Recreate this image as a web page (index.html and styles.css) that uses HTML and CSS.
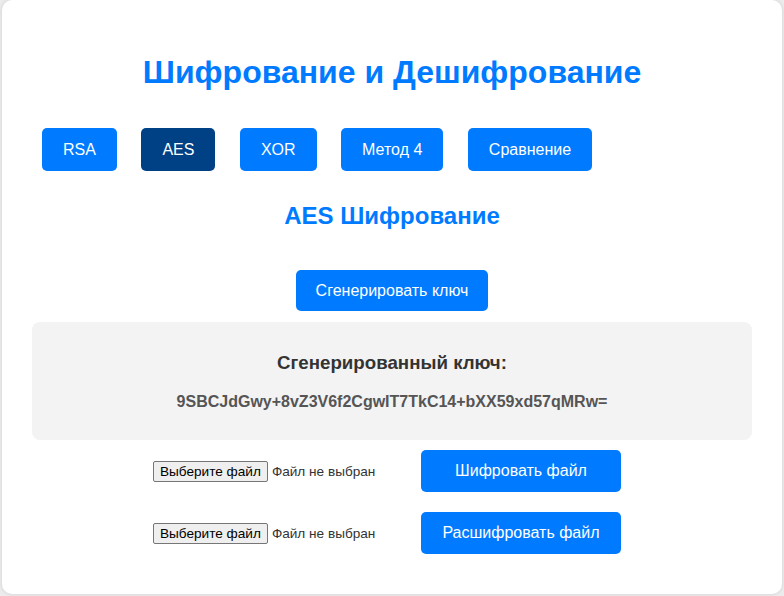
FILE: index.html
```html
<!DOCTYPE html>
<html lang="ru">
<head>
<meta charset="utf-8">
<title>Шифрование и Дешифрование</title>
<link rel="stylesheet" href="styles.css">
</head>
<body>
<div class="card">
  <h1 class="title">Шифрование и Дешифрование</h1>
  <nav class="tabs">
    <button class="btn tab">RSA</button>
    <button class="btn tab active">AES</button>
    <button class="btn tab">XOR</button>
    <button class="btn tab">Метод 4</button>
    <button class="btn tab">Сравнение</button>
  </nav>
  <section class="panel">
    <h2 class="panel-title">AES Шифрование</h2>
    <div class="gen-row">
      <button class="btn">Сгенерировать ключ</button>
    </div>
    <div class="key-box">
      <h3 class="key-title">Сгенерированный ключ:</h3>
      <p class="key-value">9SBCJdGwy+8vZ3V6f2CgwIT7TkC14+bXX59xd57qMRw=</p>
    </div>
    <div class="file-row">
      <label class="picker">
        <input type="file" class="hidden-input">
        <span class="picker-btn">Выберите файл</span>
        <span class="picker-text">Файл не выбран</span>
      </label>
      <button class="btn wide">Шифровать файл</button>
    </div>
    <div class="file-row">
      <label class="picker">
        <input type="file" class="hidden-input">
        <span class="picker-btn">Выберите файл</span>
        <span class="picker-text">Файл не выбран</span>
      </label>
      <button class="btn wide">Расшифровать файл</button>
    </div>
  </section>
</div>
</body>
</html>
```

FILE: styles.css
```css
html, body {
  margin: 0;
  padding: 0;
}
body {
  background: #ececec;
  padding: 0 2px 2px 2px;
  font-family: "Liberation Sans", Arial, sans-serif;
  color: #333;
}
.card {
  background: #fff;
  border-radius: 10px;
  box-shadow: 0 0 4px rgba(0, 0, 0, 0.12);
  height: 594px;
  box-sizing: border-box;
  padding: 30px;
}
.title {
  margin: 24px 0 27px;
  font-size: 32px;
  line-height: 37px;
  font-weight: bold;
  color: #007bff;
  text-align: center;
}
.tabs {
  display: flex;
  gap: 4.5px;
}
.btn {
  font-family: "Liberation Sans", Arial, sans-serif;
  font-size: 16px;
  line-height: 19px;
  color: #fff;
  background: #007bff;
  border: none;
  border-radius: 5px;
  padding: 12px 21px;
  margin: 10px;
  cursor: pointer;
}
.btn.active {
  background: #004085;
}
.panel-title {
  margin: 21px 0 30px;
  font-size: 24px;
  line-height: 28px;
  font-weight: bold;
  color: #007bff;
  text-align: center;
}
.gen-row {
  display: flex;
  justify-content: center;
}
.gen-row .btn {
  padding: 11px 20px;
}
.key-box {
  margin-top: 1px;
  background: #f3f3f3;
  border-radius: 8px;
  padding: 20px;
  text-align: center;
}
.key-title {
  margin: 10px 0 19px;
  font-size: 18.72px;
  line-height: 22px;
  font-weight: bold;
  color: #333;
}
.key-value {
  margin: 0 0 9px;
  font-size: 16px;
  line-height: 18px;
  font-weight: bold;
  color: #555;
}
.file-row {
  display: flex;
  justify-content: center;
  align-items: center;
  gap: 4px;
}
.picker {
  width: 254px;
  display: flex;
  align-items: center;
  gap: 4px;
  font-size: 13.6px;
  cursor: pointer;
}
.hidden-input {
  display: none;
}
.picker-btn {
  background: #efefef;
  border: 1px solid #767676;
  border-radius: 2px;
  padding: 1px 6px;
  color: #000;
  line-height: 17px;
}
.picker-text {
  color: #333;
}
.btn.wide {
  width: 200px;
  padding: 12px 10px;
  line-height: 18px;
}
```
